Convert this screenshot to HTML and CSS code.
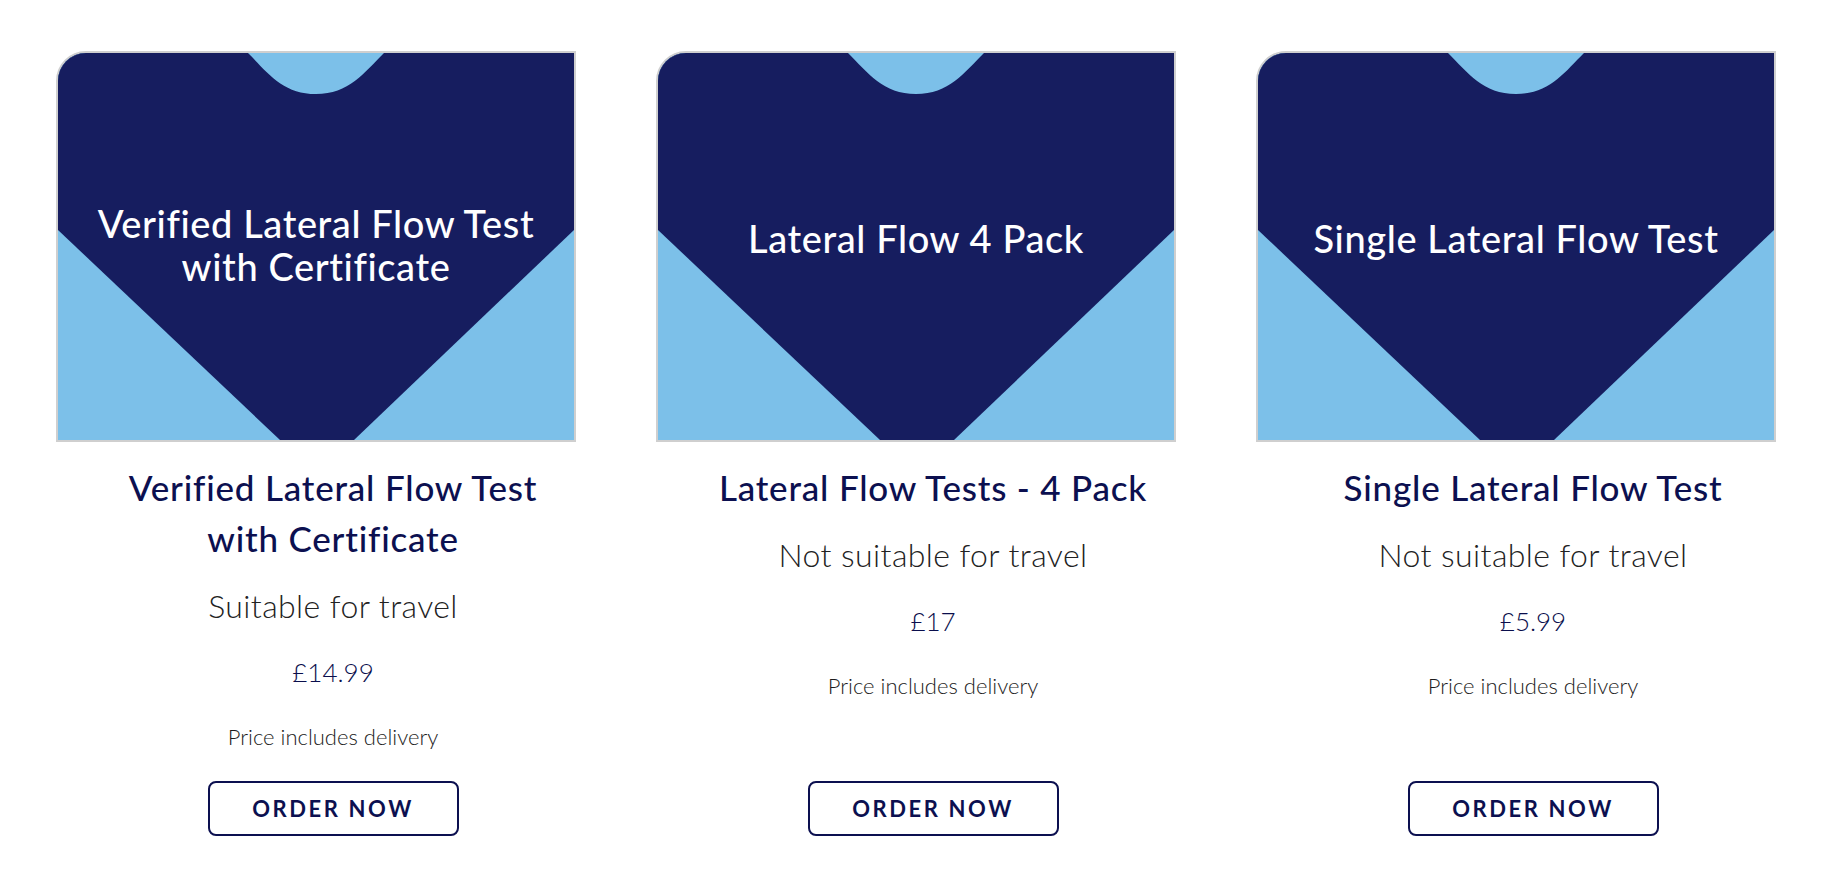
FILE: index.html
```html
<!DOCTYPE html>
<html lang="en">
<head>
<meta charset="utf-8">
<title>Lateral Flow Tests</title>
<link rel="stylesheet" href="styles.css">
</head>
<body>
<main class="products">
  <article class="card">
    <div class="thumb">
      <svg class="thumb-art" viewBox="0 0 516 387" preserveAspectRatio="none" aria-hidden="true">
        <rect width="516" height="387" fill="#7cc0e9"/>
        <polygon points="0,0 516,0 516,177 296,387 222,387 0,177" fill="#161d5f"/>
        <path d="M190,0 C210,20 225,41 258,41 C291,41 306,20 326,0 Z" fill="#7cc0e9"/>
      </svg>
      <p class="thumb-text">Verified Lateral Flow Test<br>with Certificate</p>
    </div>
    <div class="body">
      <h2 class="title">Verified Lateral Flow Test with Certificate</h2>
      <p class="sub">Suitable for travel</p>
      <p class="price">£14.99</p>
      <p class="note">Price includes delivery</p>
      <div class="foot"><a class="btn" href="#">ORDER NOW</a></div>
    </div>
  </article>
  <article class="card">
    <div class="thumb">
      <svg class="thumb-art" viewBox="0 0 516 387" preserveAspectRatio="none" aria-hidden="true">
        <rect width="516" height="387" fill="#7cc0e9"/>
        <polygon points="0,0 516,0 516,177 296,387 222,387 0,177" fill="#161d5f"/>
        <path d="M190,0 C210,20 225,41 258,41 C291,41 306,20 326,0 Z" fill="#7cc0e9"/>
      </svg>
      <p class="thumb-text single">Lateral Flow 4 Pack</p>
    </div>
    <div class="body">
      <h2 class="title">Lateral Flow Tests - 4 Pack</h2>
      <p class="sub">Not suitable for travel</p>
      <p class="price">£17</p>
      <p class="note">Price includes delivery</p>
      <div class="foot"><a class="btn" href="#">ORDER NOW</a></div>
    </div>
  </article>
  <article class="card">
    <div class="thumb">
      <svg class="thumb-art" viewBox="0 0 516 387" preserveAspectRatio="none" aria-hidden="true">
        <rect width="516" height="387" fill="#7cc0e9"/>
        <polygon points="0,0 516,0 516,177 296,387 222,387 0,177" fill="#161d5f"/>
        <path d="M190,0 C210,20 225,41 258,41 C291,41 306,20 326,0 Z" fill="#7cc0e9"/>
      </svg>
      <p class="thumb-text single">Single Lateral Flow Test</p>
    </div>
    <div class="body">
      <h2 class="title">Single Lateral Flow Test</h2>
      <p class="sub">Not suitable for travel</p>
      <p class="price">£5.99</p>
      <p class="note">Price includes delivery</p>
      <div class="foot"><a class="btn" href="#">ORDER NOW</a></div>
    </div>
  </article>
</main>
</body>
</html>
```
FILE: styles.css
```css
* { box-sizing: border-box; }

html, body {
  margin: 0;
  padding: 0;
  background: #ffffff;
}

body {
  font-family: Lato, "Open Sans", "Liberation Sans", sans-serif;
  color: #333333;
}

.products {
  display: grid;
  grid-template-columns: repeat(3, 520px);
  column-gap: 80px;
  padding: 51px 56px 0 56px;
}

.card {
  display: flex;
  flex-direction: column;
}

.thumb {
  display: grid;
  width: 520px;
  height: 391px;
  border: 2px solid #cfcfcf;
  border-top-left-radius: 30px;
  overflow: hidden;
  background: #161d5f;
}

.thumb-art {
  grid-area: 1 / 1;
  width: 100%;
  height: 100%;
  display: block;
}

.thumb-text {
  grid-area: 1 / 1;
  align-self: center;
  justify-self: center;
  margin: -4px 0 0 0;
  color: #ffffff;
  font-size: 38px;
  line-height: 43px;
  font-weight: 500;
  letter-spacing: 0.6px;
  text-align: center;
}

.thumb-text.single {
  margin-top: -17px;
}

.body {
  flex: 1;
  display: flex;
  flex-direction: column;
  align-items: center;
  text-align: center;
  padding: 0 20px 0 54px;
}

.title {
  margin: 20px 0 0 0;
  font-size: 35px;
  line-height: 51px;
  font-weight: 500;
  letter-spacing: 0.8px;
  color: #0c1050;
}

.sub {
  margin: 22px 0 0 0;
  font-size: 32px;
  line-height: 40px;
  font-weight: 300;
  letter-spacing: 0.4px;
  color: #222222;
}

.price {
  margin: 29px 0 0 0;
  font-size: 26px;
  line-height: 34px;
  font-weight: 300;
  color: #0a0e4c;
}

.note {
  margin: 34px 0 0 0;
  font-size: 22px;
  line-height: 28px;
  font-weight: 300;
  color: #1c1c1c;
}

.foot {
  flex: 1;
  display: flex;
  align-items: flex-end;
  padding-top: 30px;
}

.btn {
  display: flex;
  align-items: center;
  justify-content: center;
  width: 251px;
  height: 55px;
  border: 2px solid #0c1050;
  border-radius: 8px;
  color: #0c1050;
  text-decoration: none;
  font-size: 22px;
  font-weight: 700;
  letter-spacing: 2.6px;
}
```
